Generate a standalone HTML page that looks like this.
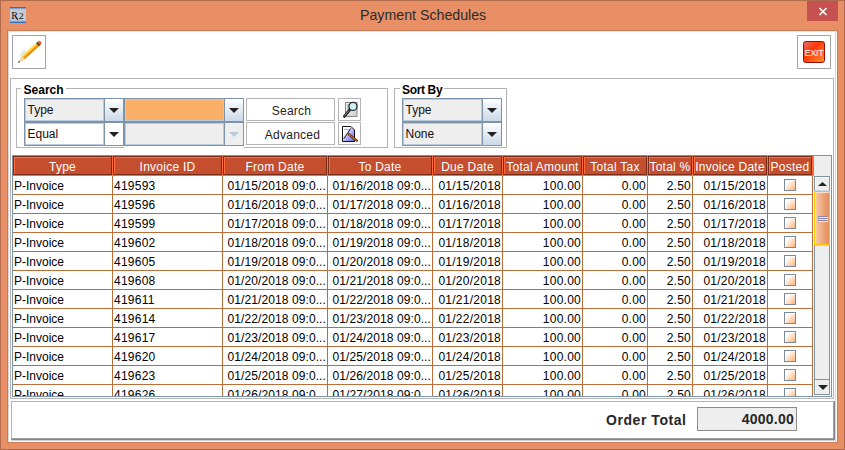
<!DOCTYPE html><html><head><meta charset="utf-8"><style>
*{margin:0;padding:0;box-sizing:border-box}
html,body{width:845px;height:450px;overflow:hidden}
body{position:relative;background:#E98F66;font-family:"Liberation Sans",sans-serif;font-size:12px;color:#000}
.a{position:absolute}
.t{position:absolute;white-space:nowrap;line-height:14px;letter-spacing:0.25px}
</style></head><body>
<div class="a" style="left:0;top:0;width:845px;height:1px;background:#B06A4C"></div>
<div class="a" style="left:0;top:0;width:1px;height:450px;background:#B06A4C"></div>
<div class="a" style="left:844px;top:0;width:1px;height:450px;background:#B06A4C"></div>
<div class="a" style="left:0;top:449px;width:845px;height:1px;background:#B06A4C"></div>
<svg class="a" style="left:10px;top:7px" width="16" height="16" viewBox="0 0 16 16">
<rect x="0" y="0" width="16" height="16" fill="#C6CAD4"/>
<rect x="0" y="0" width="16" height="1.6" fill="#2F6FC4"/>
<rect x="0" y="14.4" width="16" height="1.6" fill="#2F6FC4"/>
<rect x="0" y="1.6" width="16" height="0.8" fill="#9FB4D8"/>
<rect x="0" y="13.6" width="16" height="0.8" fill="#9FB4D8"/>
<text x="1.2" y="11.6" font-family="Liberation Serif" font-size="10" fill="#151515">R</text>
<path d="M5 8.4 L7.8 13.2" stroke="#151515" stroke-width="1"/>
<text x="7.2" y="11.6" font-family="Liberation Serif" font-size="9" fill="#202020" transform="scale(1.18 1)">2</text>
</svg>
<div class="t" style="left:360px;top:6px;font-size:14.2px;line-height:18px;color:#2B2B2B;letter-spacing:0">Payment Schedules</div>
<div class="a" style="left:807px;top:1px;width:31px;height:20px;background:#C75050"></div>
<svg class="a" style="left:818px;top:7px" width="10" height="9" viewBox="0 0 10 9"><path d="M1.5 1 L8.5 8 M8.5 1 L1.5 8" stroke="#fff" stroke-width="1.6"/></svg>
<div class="a" style="left:7px;top:30px;width:831px;height:413px;background:#C97A56"></div>
<div class="a" style="left:8px;top:31px;width:829px;height:411px;background:#fff"></div>
<div class="a" style="left:8px;top:31px;width:1px;height:411px;background:#D6D8DA"></div>
<div class="a" style="left:8px;top:31px;width:829px;height:1px;background:#E4EAEE"></div>
<div class="a" style="left:835px;top:31px;width:1px;height:411px;background:#D8D8D8"></div>
<div class="a" style="left:12px;top:35px;width:34px;height:34px;border:1px solid #A4A4A4"></div>
<div class="a" style="left:797px;top:35px;width:34px;height:34px;border:1px solid #A4A4A4"></div>
<svg class="a" style="left:14px;top:37px" width="30" height="30" viewBox="0 0 30 30">
<defs><filter id="bl" x="-50%" y="-50%" width="200%" height="200%"><feGaussianBlur stdDeviation="1.1"/></filter></defs>
<path d="M6.66 20.15 L13.29 14.06 L9.58 12.98 L4.94 19.01 Z" fill="#C0C0C0" opacity="0.5" filter="url(#bl)"/>
<path d="M4.78 23.72 L7.90 19.28 L10.74 22.37 L6.06 25.11 Z" fill="#F2D4A8"/>
<path d="M7.90 19.28 L22.26 6.09 L23.48 7.41 L9.12 20.60 Z" fill="#FFC51A"/>
<path d="M9.12 20.60 L23.48 7.41 L25.10 9.18 L10.74 22.37 Z" fill="#F09000"/>
<path d="M8.54 19.24 L22.53 6.38 L23.01 6.90 L9.01 19.75 Z" fill="#FFE070"/>
<path d="M22.11 6.22 L23.59 4.87 L26.43 7.96 L24.96 9.31 Z" fill="#404040"/>
<path d="M23.59 4.87 L25.27 3.75 L27.00 4.59 L27.69 6.38 L26.43 7.96 Z" fill="#F65A28"/>
<path d="M3.80 25.90 L5.00 23.66 L6.14 24.89 Z" fill="#333"/>
</svg>
<svg class="a" style="left:803px;top:41px" width="22" height="22" viewBox="0 0 22 22">
<defs><linearGradient id="eg" x1="0" y1="0" x2="1" y2="1"><stop offset="0" stop-color="#E27070"/><stop offset="0.4" stop-color="#FF3808"/><stop offset="1" stop-color="#FF9A30"/></linearGradient></defs>
<rect x="0.5" y="0.5" width="21" height="21" rx="2.2" fill="url(#eg)" stroke="#9A0E0A"/>
<text x="11" y="15" text-anchor="middle" font-family="Liberation Sans" font-size="9.2" fill="#fff" letter-spacing="-0.3">EXIT</text>
</svg>
<div class="a" style="left:10px;top:78px;width:824px;height:321px;border:1px solid #B4B4B4"></div>
<div class="a" style="left:16px;top:88px;width:372px;height:60px;border:1px solid #B4B4B4"></div>
<div class="t" style="left:20.6px;top:83px;padding:0 2px 0 3px;background:#fff;font-weight:bold;font-size:12px;line-height:14px;letter-spacing:0">Search</div>
<div class="a" style="left:394px;top:88px;width:113px;height:60px;border:1px solid #B4B4B4"></div>
<div class="t" style="left:400px;top:83px;padding:0 2px;background:#fff;font-weight:bold;font-size:12px;line-height:14px;letter-spacing:-0.35px">Sort By</div>
<div class="a" style="left:124px;top:146px;width:120px;height:3px;background:#fff"></div>
<div class="a" style="left:24px;top:98px;width:100px;height:24px;border:1px solid #7E93A8;background:#EEEEEE"></div><div class="a" style="left:25px;top:99px;width:79px;height:22px;border:1px solid #B8CCE0"></div><div class="a" style="left:104px;top:98px;width:20px;height:24px;border:1px solid #7E93A8;background:linear-gradient(#FFFFFF,#C9D8E8)"></div><svg class="a" style="left:109px;top:108px" width="10" height="5" viewBox="0 0 10 5"><path d="M0 0 L10 0 L5 5 Z" fill="#222"/></svg><div class="t" style="left:27.5px;top:103px;color:#111;letter-spacing:0">Type</div>
<div class="a" style="left:24px;top:122px;width:100px;height:24px;border:1px solid #7E93A8;background:#FFFFFF"></div><div class="a" style="left:25px;top:123px;width:79px;height:22px;border:1px solid #B8CCE0"></div><div class="a" style="left:104px;top:122px;width:20px;height:24px;border:1px solid #7E93A8;background:#FFFFFF"></div><svg class="a" style="left:109px;top:132px" width="10" height="5" viewBox="0 0 10 5"><path d="M0 0 L10 0 L5 5 Z" fill="#222"/></svg><div class="t" style="left:27.5px;top:127px;color:#111;letter-spacing:0">Equal</div>
<div class="a" style="left:124px;top:98px;width:120px;height:24px;border:1px solid #7E93A8;background:#FBB06A"></div><div class="a" style="left:125px;top:99px;width:99px;height:22px;border:1px solid #B8CCE0"></div><div class="a" style="left:224px;top:98px;width:20px;height:24px;border:1px solid #7E93A8;background:linear-gradient(#FFFFFF,#C9D8E8)"></div><svg class="a" style="left:229px;top:108px" width="10" height="5" viewBox="0 0 10 5"><path d="M0 0 L10 0 L5 5 Z" fill="#222"/></svg>
<div class="a" style="left:124px;top:122px;width:120px;height:24px;border:1px solid #7E93A8;background:#EEEEEE"></div><div class="a" style="left:125px;top:123px;width:99px;height:22px;border:1px solid #B8CCE0"></div><div class="a" style="left:224px;top:122px;width:20px;height:24px;border:1px solid #7E93A8;background:#EEEEEE"></div><svg class="a" style="left:229px;top:132px" width="10" height="5" viewBox="0 0 10 5"><path d="M0 0 L10 0 L5 5 Z" fill="#B8CCE0"/></svg>
<div class="a" style="left:402px;top:98px;width:100px;height:24px;border:1px solid #7E93A8;background:#EEEEEE"></div><div class="a" style="left:403px;top:99px;width:79px;height:22px;border:1px solid #B8CCE0"></div><div class="a" style="left:482px;top:98px;width:20px;height:24px;border:1px solid #7E93A8;background:linear-gradient(#FFFFFF,#C9D8E8)"></div><svg class="a" style="left:487px;top:108px" width="10" height="5" viewBox="0 0 10 5"><path d="M0 0 L10 0 L5 5 Z" fill="#222"/></svg><div class="t" style="left:405.5px;top:103px;color:#111;letter-spacing:0">Type</div>
<div class="a" style="left:402px;top:122px;width:100px;height:24px;border:1px solid #7E93A8;background:#EEEEEE"></div><div class="a" style="left:403px;top:123px;width:79px;height:22px;border:1px solid #B8CCE0"></div><div class="a" style="left:482px;top:122px;width:20px;height:24px;border:1px solid #7E93A8;background:linear-gradient(#FFFFFF,#C9D8E8)"></div><svg class="a" style="left:487px;top:132px" width="10" height="5" viewBox="0 0 10 5"><path d="M0 0 L10 0 L5 5 Z" fill="#222"/></svg><div class="t" style="left:405.5px;top:127px;color:#111;letter-spacing:0">None</div>
<div class="a" style="left:246px;top:98px;width:89px;height:23px;border:1px solid #B4B4B4"></div>
<div class="t" style="left:247px;top:104px;width:89px;text-align:center;color:#222">Search</div>
<div class="a" style="left:246px;top:122px;width:89px;height:23px;border:1px solid #B4B4B4"></div>
<div class="t" style="left:248px;top:128px;width:89px;text-align:center;color:#222">Advanced</div>
<div class="a" style="left:338px;top:98px;width:23px;height:23px;border:1px solid #B4B4B4"></div>
<div class="a" style="left:338px;top:122px;width:23px;height:23px;border:1px solid #B4B4B4"></div>
<svg class="a" style="left:338px;top:98px" width="23" height="23" viewBox="0 0 23 23">
<defs><linearGradient id="lg1" x1="0" y1="0" x2="1" y2="1"><stop offset="0" stop-color="#F4F4F4"/><stop offset="1" stop-color="#CFCFCF"/></linearGradient></defs>
<rect x="7.5" y="4.5" width="11.5" height="14" fill="url(#lg1)" stroke="#8A8A8A"/>
<path d="M9 7 H12 M9 9 H11 M9 11 H11" stroke="#8A8A8A" stroke-width="0.8"/>
<circle cx="15" cy="8.4" r="4" fill="#C8F4F6" stroke="#2A2A2A" stroke-width="1.3"/>
<path d="M11.6 12 L6.4 18.4" stroke="#2A2A2A" stroke-width="2.8" stroke-linecap="round"/>
<path d="M11 12.4 L6.8 17.6" stroke="#A0A0A0" stroke-width="0.7"/>
</svg>
<svg class="a" style="left:338px;top:122px" width="23" height="23" viewBox="0 0 23 23">
<defs><linearGradient id="lg2" x1="0" y1="0" x2="1" y2="1"><stop offset="0.3" stop-color="#FFFFFF"/><stop offset="0.6" stop-color="#A8A8F4"/><stop offset="1" stop-color="#6464E8"/></linearGradient></defs>
<path d="M4.5 4.5 L13 4.5 L16.5 8 L16.5 19.5 L4.5 19.5 Z" fill="url(#lg2)" stroke="#111" stroke-width="1"/>
<path d="M6 7.6 Q8.5 6.6 11 8.4" stroke="#9C9CF0" stroke-width="1.1" fill="none"/>
<path d="M12.8 6.5 L5.8 16.8" stroke="#111" stroke-width="1"/>
<path d="M11 12.5 L18.8 18.6" stroke="#3A2010" stroke-width="2.4" stroke-linecap="round"/>
<path d="M11 12.5 L18.8 18.6" stroke="#D8703A" stroke-width="1.2" stroke-linecap="round"/>
</svg>
<div class="a" style="left:12px;top:155px;width:820px;height:242px;border:1px solid #7E93A8"></div>
<div class="a" style="left:13px;top:156px;width:801px;height:20px;background:#FF6B3B"></div>
<div class="a" style="left:13px;top:156px;width:99px;height:19px;border:1px solid #7A2E18;background:#C44E2D"></div>
<div class="a" style="left:14px;top:157px;width:97px;height:17px;border-top:1px solid #FF6B3B;border-left:1px solid #FF6B3B"></div>
<div class="t" style="left:13px;top:160px;width:99px;text-align:center;color:#fff">Type</div>
<div class="a" style="left:113px;top:156px;width:109px;height:19px;border:1px solid #7A2E18;background:#C44E2D"></div>
<div class="a" style="left:114px;top:157px;width:107px;height:17px;border-top:1px solid #FF6B3B;border-left:1px solid #FF6B3B"></div>
<div class="t" style="left:113px;top:160px;width:109px;text-align:center;color:#fff">Invoice ID</div>
<div class="a" style="left:223px;top:156px;width:104px;height:19px;border:1px solid #7A2E18;background:#C44E2D"></div>
<div class="a" style="left:224px;top:157px;width:102px;height:17px;border-top:1px solid #FF6B3B;border-left:1px solid #FF6B3B"></div>
<div class="t" style="left:223px;top:160px;width:104px;text-align:center;color:#fff">From Date</div>
<div class="a" style="left:328px;top:156px;width:104px;height:19px;border:1px solid #7A2E18;background:#C44E2D"></div>
<div class="a" style="left:329px;top:157px;width:102px;height:17px;border-top:1px solid #FF6B3B;border-left:1px solid #FF6B3B"></div>
<div class="t" style="left:328px;top:160px;width:104px;text-align:center;color:#fff">To Date</div>
<div class="a" style="left:433px;top:156px;width:69px;height:19px;border:1px solid #7A2E18;background:#C44E2D"></div>
<div class="a" style="left:434px;top:157px;width:67px;height:17px;border-top:1px solid #FF6B3B;border-left:1px solid #FF6B3B"></div>
<div class="t" style="left:433px;top:160px;width:69px;text-align:center;color:#fff">Due Date</div>
<div class="a" style="left:503px;top:156px;width:79px;height:19px;border:1px solid #7A2E18;background:#C44E2D"></div>
<div class="a" style="left:504px;top:157px;width:77px;height:17px;border-top:1px solid #FF6B3B;border-left:1px solid #FF6B3B"></div>
<div class="t" style="left:503px;top:160px;width:79px;text-align:center;color:#fff">Total Amount</div>
<div class="a" style="left:583px;top:156px;width:64px;height:19px;border:1px solid #7A2E18;background:#C44E2D"></div>
<div class="a" style="left:584px;top:157px;width:62px;height:17px;border-top:1px solid #FF6B3B;border-left:1px solid #FF6B3B"></div>
<div class="t" style="left:583px;top:160px;width:64px;text-align:center;color:#fff">Total Tax</div>
<div class="a" style="left:648px;top:156px;width:44px;height:19px;border:1px solid #7A2E18;background:#C44E2D"></div>
<div class="a" style="left:649px;top:157px;width:42px;height:17px;border-top:1px solid #FF6B3B;border-left:1px solid #FF6B3B"></div>
<div class="t" style="left:648px;top:160px;width:44px;text-align:center;color:#fff">Total %</div>
<div class="a" style="left:693px;top:156px;width:74px;height:19px;border:1px solid #7A2E18;background:#C44E2D"></div>
<div class="a" style="left:694px;top:157px;width:72px;height:17px;border-top:1px solid #FF6B3B;border-left:1px solid #FF6B3B"></div>
<div class="t" style="left:693px;top:160px;width:74px;text-align:center;color:#fff">Invoice Date</div>
<div class="a" style="left:768px;top:156px;width:44px;height:19px;border:1px solid #7A2E18;background:#C44E2D"></div>
<div class="a" style="left:769px;top:157px;width:42px;height:17px;border-top:1px solid #FF6B3B;border-left:1px solid #FF6B3B"></div>
<div class="t" style="left:768px;top:160px;width:44px;text-align:center;color:#fff">Posted</div>
<div class="a" style="left:814px;top:156px;width:17px;height:20px;background:#EEEEEE"></div>
<div class="a" style="left:13px;top:176px;width:801px;height:220px;overflow:hidden;background:#fff"><div class="a" style="left:0;top:18px;width:800px;height:1px;background:#BC6E3A"></div><div class="a" style="left:0;top:37px;width:800px;height:1px;background:#BC6E3A"></div><div class="a" style="left:0;top:56px;width:800px;height:1px;background:#BC6E3A"></div><div class="a" style="left:0;top:75px;width:800px;height:1px;background:#BC6E3A"></div><div class="a" style="left:0;top:94px;width:800px;height:1px;background:#BC6E3A"></div><div class="a" style="left:0;top:113px;width:800px;height:1px;background:#BC6E3A"></div><div class="a" style="left:0;top:132px;width:800px;height:1px;background:#BC6E3A"></div><div class="a" style="left:0;top:151px;width:800px;height:1px;background:#BC6E3A"></div><div class="a" style="left:0;top:170px;width:800px;height:1px;background:#BC6E3A"></div><div class="a" style="left:0;top:189px;width:800px;height:1px;background:#BC6E3A"></div><div class="a" style="left:0;top:208px;width:800px;height:1px;background:#BC6E3A"></div><div class="a" style="left:0;top:227px;width:800px;height:1px;background:#BC6E3A"></div><div class="a" style="left:99px;top:0;width:1px;height:220px;background:#BC6E3A"></div><div class="a" style="left:209px;top:0;width:1px;height:220px;background:#BC6E3A"></div><div class="a" style="left:314px;top:0;width:1px;height:220px;background:#BC6E3A"></div><div class="a" style="left:419px;top:0;width:1px;height:220px;background:#BC6E3A"></div><div class="a" style="left:489px;top:0;width:1px;height:220px;background:#BC6E3A"></div><div class="a" style="left:569px;top:0;width:1px;height:220px;background:#BC6E3A"></div><div class="a" style="left:634px;top:0;width:1px;height:220px;background:#BC6E3A"></div><div class="a" style="left:679px;top:0;width:1px;height:220px;background:#BC6E3A"></div><div class="a" style="left:754px;top:0;width:1px;height:220px;background:#BC6E3A"></div><div class="a" style="left:799px;top:0;width:1px;height:220px;background:#BC6E3A"></div><div class="t" style="left:1px;top:3px;letter-spacing:0">P-Invoice</div><div class="t" style="left:101px;top:3px">419593</div><div class="t" style="left:210px;top:3px;width:103px;text-align:right;letter-spacing:0.1px">01/15/2018 09:0...</div><div class="t" style="left:315px;top:3px;width:103px;text-align:right;letter-spacing:0.1px">01/16/2018 09:0...</div><div class="t" style="left:420px;top:3px;width:68px;text-align:right">01/15/2018</div><div class="t" style="left:490px;top:3px;width:78px;text-align:right">100.00</div><div class="t" style="left:570px;top:3px;width:63px;text-align:right">0.00</div><div class="t" style="left:635px;top:3px;width:43px;text-align:right">2.50</div><div class="t" style="left:680px;top:3px;width:73px;text-align:right">01/15/2018</div><div class="a" style="left:771px;top:3px;width:12px;height:12px;border:1px solid #7A8A99;background:linear-gradient(135deg,#FFFFFF 22%,#FFB47A 100%)"><div style="position:absolute;left:0;top:0;width:10px;height:10px;border-top:1px solid #fff;border-left:1px solid #fff"></div></div><div class="t" style="left:1px;top:22px;letter-spacing:0">P-Invoice</div><div class="t" style="left:101px;top:22px">419596</div><div class="t" style="left:210px;top:22px;width:103px;text-align:right;letter-spacing:0.1px">01/16/2018 09:0...</div><div class="t" style="left:315px;top:22px;width:103px;text-align:right;letter-spacing:0.1px">01/17/2018 09:0...</div><div class="t" style="left:420px;top:22px;width:68px;text-align:right">01/16/2018</div><div class="t" style="left:490px;top:22px;width:78px;text-align:right">100.00</div><div class="t" style="left:570px;top:22px;width:63px;text-align:right">0.00</div><div class="t" style="left:635px;top:22px;width:43px;text-align:right">2.50</div><div class="t" style="left:680px;top:22px;width:73px;text-align:right">01/16/2018</div><div class="a" style="left:771px;top:22px;width:12px;height:12px;border:1px solid #7A8A99;background:linear-gradient(135deg,#FFFFFF 22%,#FFB47A 100%)"><div style="position:absolute;left:0;top:0;width:10px;height:10px;border-top:1px solid #fff;border-left:1px solid #fff"></div></div><div class="t" style="left:1px;top:41px;letter-spacing:0">P-Invoice</div><div class="t" style="left:101px;top:41px">419599</div><div class="t" style="left:210px;top:41px;width:103px;text-align:right;letter-spacing:0.1px">01/17/2018 09:0...</div><div class="t" style="left:315px;top:41px;width:103px;text-align:right;letter-spacing:0.1px">01/18/2018 09:0...</div><div class="t" style="left:420px;top:41px;width:68px;text-align:right">01/17/2018</div><div class="t" style="left:490px;top:41px;width:78px;text-align:right">100.00</div><div class="t" style="left:570px;top:41px;width:63px;text-align:right">0.00</div><div class="t" style="left:635px;top:41px;width:43px;text-align:right">2.50</div><div class="t" style="left:680px;top:41px;width:73px;text-align:right">01/17/2018</div><div class="a" style="left:771px;top:41px;width:12px;height:12px;border:1px solid #7A8A99;background:linear-gradient(135deg,#FFFFFF 22%,#FFB47A 100%)"><div style="position:absolute;left:0;top:0;width:10px;height:10px;border-top:1px solid #fff;border-left:1px solid #fff"></div></div><div class="t" style="left:1px;top:60px;letter-spacing:0">P-Invoice</div><div class="t" style="left:101px;top:60px">419602</div><div class="t" style="left:210px;top:60px;width:103px;text-align:right;letter-spacing:0.1px">01/18/2018 09:0...</div><div class="t" style="left:315px;top:60px;width:103px;text-align:right;letter-spacing:0.1px">01/19/2018 09:0...</div><div class="t" style="left:420px;top:60px;width:68px;text-align:right">01/18/2018</div><div class="t" style="left:490px;top:60px;width:78px;text-align:right">100.00</div><div class="t" style="left:570px;top:60px;width:63px;text-align:right">0.00</div><div class="t" style="left:635px;top:60px;width:43px;text-align:right">2.50</div><div class="t" style="left:680px;top:60px;width:73px;text-align:right">01/18/2018</div><div class="a" style="left:771px;top:60px;width:12px;height:12px;border:1px solid #7A8A99;background:linear-gradient(135deg,#FFFFFF 22%,#FFB47A 100%)"><div style="position:absolute;left:0;top:0;width:10px;height:10px;border-top:1px solid #fff;border-left:1px solid #fff"></div></div><div class="t" style="left:1px;top:79px;letter-spacing:0">P-Invoice</div><div class="t" style="left:101px;top:79px">419605</div><div class="t" style="left:210px;top:79px;width:103px;text-align:right;letter-spacing:0.1px">01/19/2018 09:0...</div><div class="t" style="left:315px;top:79px;width:103px;text-align:right;letter-spacing:0.1px">01/20/2018 09:0...</div><div class="t" style="left:420px;top:79px;width:68px;text-align:right">01/19/2018</div><div class="t" style="left:490px;top:79px;width:78px;text-align:right">100.00</div><div class="t" style="left:570px;top:79px;width:63px;text-align:right">0.00</div><div class="t" style="left:635px;top:79px;width:43px;text-align:right">2.50</div><div class="t" style="left:680px;top:79px;width:73px;text-align:right">01/19/2018</div><div class="a" style="left:771px;top:79px;width:12px;height:12px;border:1px solid #7A8A99;background:linear-gradient(135deg,#FFFFFF 22%,#FFB47A 100%)"><div style="position:absolute;left:0;top:0;width:10px;height:10px;border-top:1px solid #fff;border-left:1px solid #fff"></div></div><div class="t" style="left:1px;top:98px;letter-spacing:0">P-Invoice</div><div class="t" style="left:101px;top:98px">419608</div><div class="t" style="left:210px;top:98px;width:103px;text-align:right;letter-spacing:0.1px">01/20/2018 09:0...</div><div class="t" style="left:315px;top:98px;width:103px;text-align:right;letter-spacing:0.1px">01/21/2018 09:0...</div><div class="t" style="left:420px;top:98px;width:68px;text-align:right">01/20/2018</div><div class="t" style="left:490px;top:98px;width:78px;text-align:right">100.00</div><div class="t" style="left:570px;top:98px;width:63px;text-align:right">0.00</div><div class="t" style="left:635px;top:98px;width:43px;text-align:right">2.50</div><div class="t" style="left:680px;top:98px;width:73px;text-align:right">01/20/2018</div><div class="a" style="left:771px;top:98px;width:12px;height:12px;border:1px solid #7A8A99;background:linear-gradient(135deg,#FFFFFF 22%,#FFB47A 100%)"><div style="position:absolute;left:0;top:0;width:10px;height:10px;border-top:1px solid #fff;border-left:1px solid #fff"></div></div><div class="t" style="left:1px;top:117px;letter-spacing:0">P-Invoice</div><div class="t" style="left:101px;top:117px">419611</div><div class="t" style="left:210px;top:117px;width:103px;text-align:right;letter-spacing:0.1px">01/21/2018 09:0...</div><div class="t" style="left:315px;top:117px;width:103px;text-align:right;letter-spacing:0.1px">01/22/2018 09:0...</div><div class="t" style="left:420px;top:117px;width:68px;text-align:right">01/21/2018</div><div class="t" style="left:490px;top:117px;width:78px;text-align:right">100.00</div><div class="t" style="left:570px;top:117px;width:63px;text-align:right">0.00</div><div class="t" style="left:635px;top:117px;width:43px;text-align:right">2.50</div><div class="t" style="left:680px;top:117px;width:73px;text-align:right">01/21/2018</div><div class="a" style="left:771px;top:117px;width:12px;height:12px;border:1px solid #7A8A99;background:linear-gradient(135deg,#FFFFFF 22%,#FFB47A 100%)"><div style="position:absolute;left:0;top:0;width:10px;height:10px;border-top:1px solid #fff;border-left:1px solid #fff"></div></div><div class="t" style="left:1px;top:136px;letter-spacing:0">P-Invoice</div><div class="t" style="left:101px;top:136px">419614</div><div class="t" style="left:210px;top:136px;width:103px;text-align:right;letter-spacing:0.1px">01/22/2018 09:0...</div><div class="t" style="left:315px;top:136px;width:103px;text-align:right;letter-spacing:0.1px">01/23/2018 09:0...</div><div class="t" style="left:420px;top:136px;width:68px;text-align:right">01/22/2018</div><div class="t" style="left:490px;top:136px;width:78px;text-align:right">100.00</div><div class="t" style="left:570px;top:136px;width:63px;text-align:right">0.00</div><div class="t" style="left:635px;top:136px;width:43px;text-align:right">2.50</div><div class="t" style="left:680px;top:136px;width:73px;text-align:right">01/22/2018</div><div class="a" style="left:771px;top:136px;width:12px;height:12px;border:1px solid #7A8A99;background:linear-gradient(135deg,#FFFFFF 22%,#FFB47A 100%)"><div style="position:absolute;left:0;top:0;width:10px;height:10px;border-top:1px solid #fff;border-left:1px solid #fff"></div></div><div class="t" style="left:1px;top:155px;letter-spacing:0">P-Invoice</div><div class="t" style="left:101px;top:155px">419617</div><div class="t" style="left:210px;top:155px;width:103px;text-align:right;letter-spacing:0.1px">01/23/2018 09:0...</div><div class="t" style="left:315px;top:155px;width:103px;text-align:right;letter-spacing:0.1px">01/24/2018 09:0...</div><div class="t" style="left:420px;top:155px;width:68px;text-align:right">01/23/2018</div><div class="t" style="left:490px;top:155px;width:78px;text-align:right">100.00</div><div class="t" style="left:570px;top:155px;width:63px;text-align:right">0.00</div><div class="t" style="left:635px;top:155px;width:43px;text-align:right">2.50</div><div class="t" style="left:680px;top:155px;width:73px;text-align:right">01/23/2018</div><div class="a" style="left:771px;top:155px;width:12px;height:12px;border:1px solid #7A8A99;background:linear-gradient(135deg,#FFFFFF 22%,#FFB47A 100%)"><div style="position:absolute;left:0;top:0;width:10px;height:10px;border-top:1px solid #fff;border-left:1px solid #fff"></div></div><div class="t" style="left:1px;top:174px;letter-spacing:0">P-Invoice</div><div class="t" style="left:101px;top:174px">419620</div><div class="t" style="left:210px;top:174px;width:103px;text-align:right;letter-spacing:0.1px">01/24/2018 09:0...</div><div class="t" style="left:315px;top:174px;width:103px;text-align:right;letter-spacing:0.1px">01/25/2018 09:0...</div><div class="t" style="left:420px;top:174px;width:68px;text-align:right">01/24/2018</div><div class="t" style="left:490px;top:174px;width:78px;text-align:right">100.00</div><div class="t" style="left:570px;top:174px;width:63px;text-align:right">0.00</div><div class="t" style="left:635px;top:174px;width:43px;text-align:right">2.50</div><div class="t" style="left:680px;top:174px;width:73px;text-align:right">01/24/2018</div><div class="a" style="left:771px;top:174px;width:12px;height:12px;border:1px solid #7A8A99;background:linear-gradient(135deg,#FFFFFF 22%,#FFB47A 100%)"><div style="position:absolute;left:0;top:0;width:10px;height:10px;border-top:1px solid #fff;border-left:1px solid #fff"></div></div><div class="t" style="left:1px;top:193px;letter-spacing:0">P-Invoice</div><div class="t" style="left:101px;top:193px">419623</div><div class="t" style="left:210px;top:193px;width:103px;text-align:right;letter-spacing:0.1px">01/25/2018 09:0...</div><div class="t" style="left:315px;top:193px;width:103px;text-align:right;letter-spacing:0.1px">01/26/2018 09:0...</div><div class="t" style="left:420px;top:193px;width:68px;text-align:right">01/25/2018</div><div class="t" style="left:490px;top:193px;width:78px;text-align:right">100.00</div><div class="t" style="left:570px;top:193px;width:63px;text-align:right">0.00</div><div class="t" style="left:635px;top:193px;width:43px;text-align:right">2.50</div><div class="t" style="left:680px;top:193px;width:73px;text-align:right">01/25/2018</div><div class="a" style="left:771px;top:193px;width:12px;height:12px;border:1px solid #7A8A99;background:linear-gradient(135deg,#FFFFFF 22%,#FFB47A 100%)"><div style="position:absolute;left:0;top:0;width:10px;height:10px;border-top:1px solid #fff;border-left:1px solid #fff"></div></div><div class="t" style="left:1px;top:212px;letter-spacing:0">P-Invoice</div><div class="t" style="left:101px;top:212px">419626</div><div class="t" style="left:210px;top:212px;width:103px;text-align:right;letter-spacing:0.1px">01/26/2018 09:0...</div><div class="t" style="left:315px;top:212px;width:103px;text-align:right;letter-spacing:0.1px">01/27/2018 09:0...</div><div class="t" style="left:420px;top:212px;width:68px;text-align:right">01/26/2018</div><div class="t" style="left:490px;top:212px;width:78px;text-align:right">100.00</div><div class="t" style="left:570px;top:212px;width:63px;text-align:right">0.00</div><div class="t" style="left:635px;top:212px;width:43px;text-align:right">2.50</div><div class="t" style="left:680px;top:212px;width:73px;text-align:right">01/26/2018</div><div class="a" style="left:771px;top:212px;width:12px;height:12px;border:1px solid #7A8A99;background:linear-gradient(135deg,#FFFFFF 22%,#FFB47A 100%)"><div style="position:absolute;left:0;top:0;width:10px;height:10px;border-top:1px solid #fff;border-left:1px solid #fff"></div></div></div>
<div class="a" style="left:814px;top:176px;width:16px;height:15px;border:1px solid #7E93A8;border-bottom:1px solid #C8D8E8;background:#EEEEEE"></div>
<div class="a" style="left:815px;top:177px;width:14px;height:13px;border-top:1px solid #FFFFFF;border-left:1px solid #FFFFFF"></div>
<svg class="a" style="left:818px;top:182px" width="9" height="4" viewBox="0 0 9 4"><path d="M0 4 L9 4 L4.5 0 Z" fill="#222"/></svg>
<div class="a" style="left:814px;top:191px;width:16px;height:54px;border:1px solid #FFC400;background:linear-gradient(90deg,#F8CCAE,#EDA87C 55%,#E28E5C)"><div style="position:absolute;left:0;top:0;width:14px;height:52px;border-top:1px solid #FCE0CC;border-left:1px solid #FCE0CC"></div></div>
<div class="a" style="left:818px;top:216px;width:9px;height:1px;background:#8A82A2"></div>
<div class="a" style="left:819px;top:217px;width:9px;height:1px;background:#FFE2CC"></div>
<div class="a" style="left:818px;top:218px;width:9px;height:1px;background:#8A82A2"></div>
<div class="a" style="left:819px;top:219px;width:9px;height:1px;background:#FFE2CC"></div>
<div class="a" style="left:818px;top:220px;width:9px;height:1px;background:#8A82A2"></div>
<div class="a" style="left:819px;top:221px;width:9px;height:1px;background:#FFE2CC"></div>
<div class="a" style="left:814px;top:245px;width:16px;height:135px;border:1px solid #7E93A8;border-top:1px solid #B8D0E8;background:#EEEEEE"></div>
<div class="a" style="left:814px;top:380px;width:16px;height:15px;border:1px solid #7E93A8;border-top:none;background:#EEEEEE"></div>
<div class="a" style="left:815px;top:380px;width:14px;height:14px;border-left:1px solid #FFFFFF"></div>
<svg class="a" style="left:818px;top:385px" width="10" height="5" viewBox="0 0 10 5"><path d="M0 0 L10 0 L5 5 Z" fill="#222"/></svg>
<div class="a" style="left:11px;top:401px;width:824px;height:39px;border:1px solid #B4B4B4;border-right:2px solid #858585;border-bottom:2px solid #858585"></div>
<div class="a" style="left:833px;top:402px;width:1px;height:37px;background:#A0A0A0"></div>
<div class="a" style="left:12px;top:438px;width:822px;height:1px;background:#A0A0A0"></div>
<div class="a" style="left:11px;top:440px;width:825px;height:1px;background:#D0D0D0"></div>
<div class="t" style="left:606px;top:412px;font-weight:bold;font-size:14px;line-height:16px;color:#262626;letter-spacing:0.55px">Order Total</div>
<div class="a" style="left:697px;top:407px;width:100px;height:24px;border:1px solid #8C8C8C;background:#EEEEEE"></div>
<div class="t" style="left:697px;top:411px;width:97px;text-align:right;font-weight:bold;font-size:14px;line-height:16px;color:#262626">4000.00</div>
</body></html>
